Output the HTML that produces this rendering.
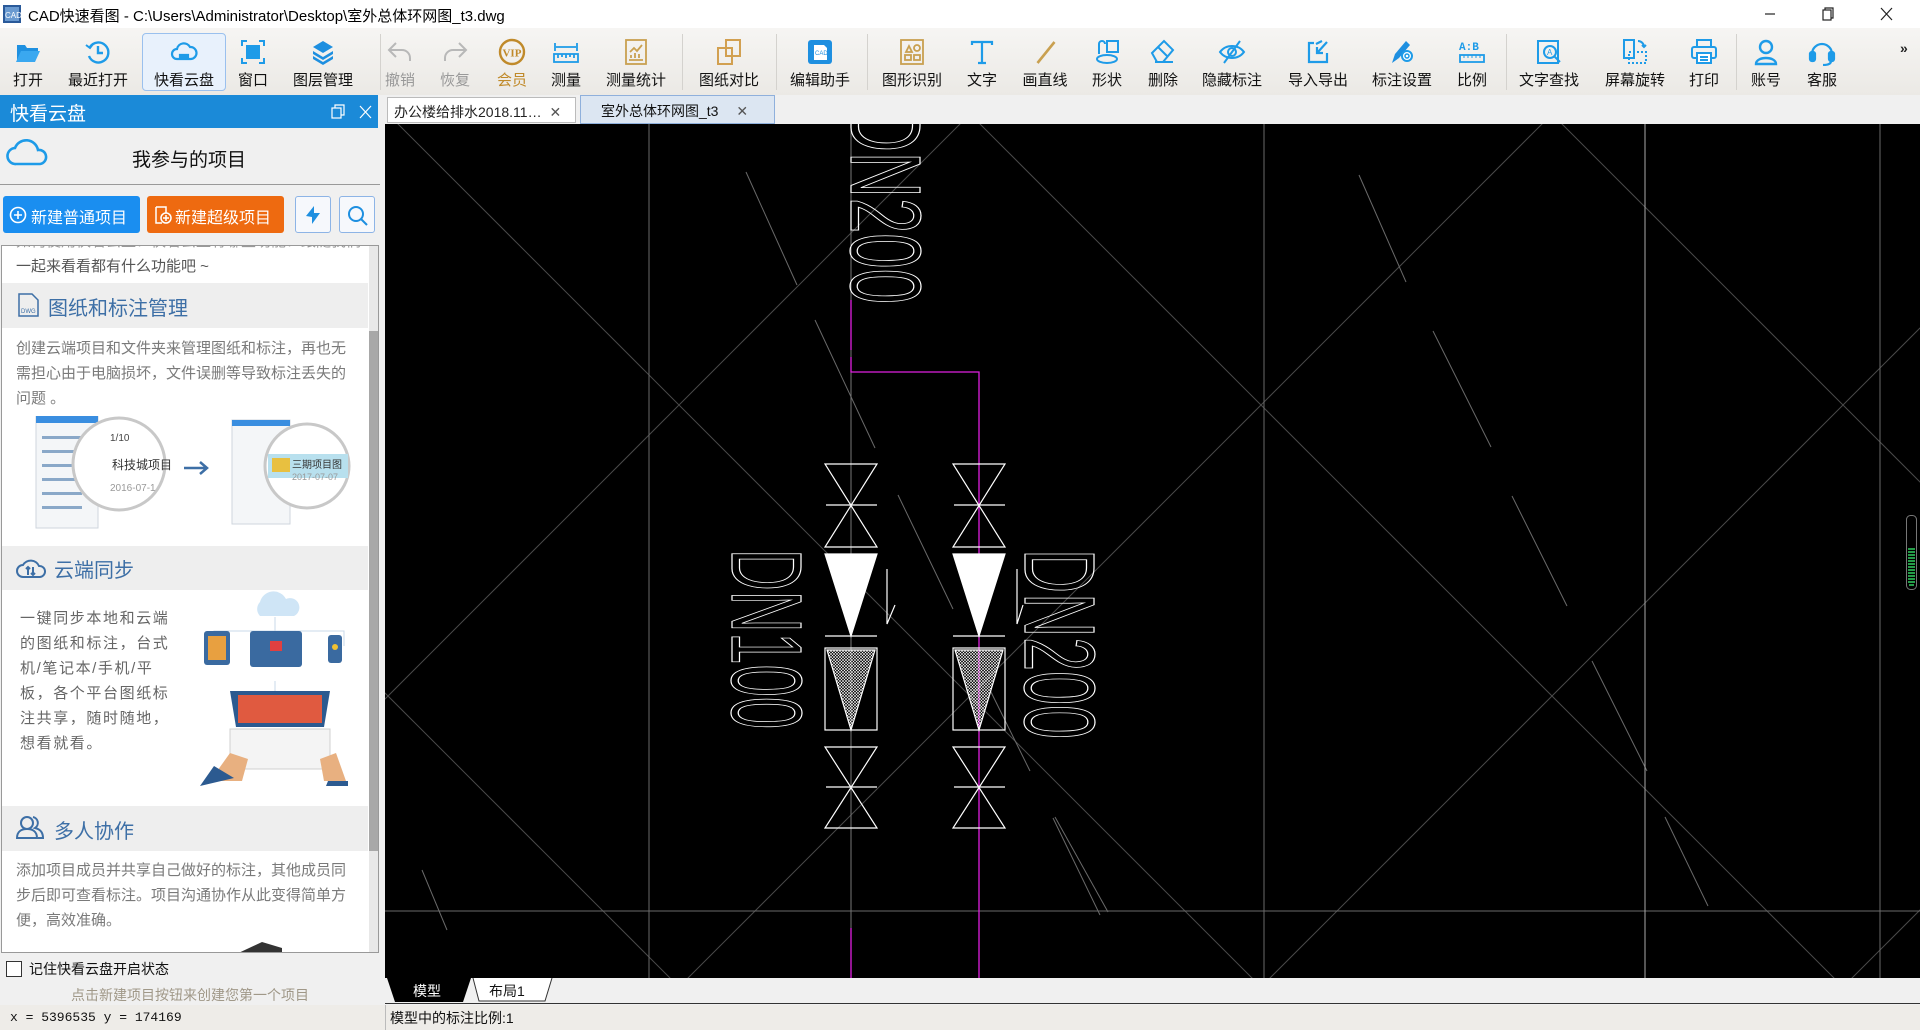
<!DOCTYPE html>
<html><head><meta charset="utf-8">
<style>
*{margin:0;padding:0;box-sizing:border-box}
body{width:1920px;height:1030px;overflow:hidden;position:relative;background:#f0f0f0;font-family:"Liberation Sans","Noto Sans CJK SC",sans-serif;}
.abs{position:absolute}
#title{left:0;top:0;width:1920px;height:28px;background:#fff}
#title .t{left:28px;top:5px;font-size:15px;color:#000;white-space:nowrap}
#tb{left:0;top:28px;width:1920px;height:67px;background:linear-gradient(#f6f5f3,#ebe9e5)}
.it{position:absolute;top:0;height:67px;transform:translateX(-50%);text-align:center;white-space:nowrap}
.it svg{position:absolute;left:50%;margin-left:-14px;top:10px;width:28px;height:28px}
.it span{display:block;margin-top:41px;font-size:15px;color:#111;padding:0 2px}
.it.dis span{color:#999}
.it.vip span{color:#c08a2a}
.sep{position:absolute;top:6px;width:1px;height:56px;background:#d4d2ce}
#panel{left:0;top:95px;width:380px;height:910px;background:#f0f0f0}
#ph{left:0;top:0;width:378px;height:33px;background:#1b8ad8;color:#fff;font-size:19px;padding:4px 10px}
.para{font-size:15px;color:#7a7a7a;line-height:25px}
.sh{position:absolute;left:0;width:366px;height:45px;background:#eeeeee;color:#3d6fa6;font-size:20px}
</style></head><body>

<div id="title" class="abs">
 <svg class="abs" style="left:3px;top:5px" width="18" height="18"><rect x="0" y="0" width="18" height="18" fill="#2a5a9a"/><rect x="2" y="2" width="14" height="14" fill="#6a9ad0"/><text x="2" y="13" font-size="8" fill="#fff" font-family="Liberation Sans">CAD</text></svg>
 <div class="abs t">CAD快速看图 - C:\Users\Administrator\Desktop\室外总体环网图_t3.dwg</div>
 <svg class="abs" style="left:1764px;top:6px" width="150" height="18" stroke="#222" fill="none" stroke-width="1.2">
  <line x1="1" y1="8" x2="11" y2="8"/>
  <rect x="59" y="4" width="8" height="10"/><path d="M61 4 V2 H69 V12 H67"/>
  <path d="M117 2 L128 14 M128 2 L117 14"/>
 </svg>
</div>

<div id="tb" class="abs">
 <div class="it" style="left:184px;top:5px;height:58px;width:84px;background:#e8f1fc;border:1px solid #9ac0ee;border-radius:4px"></div>
 <div class="it" style="left:28px"><svg viewBox="0 0 28 28"><path d="M3 7h8l2 3h11v3H8l-5 11z" fill="#1f90e0"/><path d="M7 13h19l-5 11H2z" fill="#3aa8f0"/></svg><span>打开</span></div>
 <div class="it" style="left:98px"><svg viewBox="0 0 28 28" fill="none" stroke="#1e9be8" stroke-width="2.4"><path d="M6 9a10 10 0 1 1-1 9"/><path d="M14 8v7h5"/><path d="M2 7l4 3 3-4" stroke-width="2"/></svg><span>最近打开</span></div>
 <div class="it" style="left:184px"><svg viewBox="0 0 28 28" fill="none" stroke="#1e9be8" stroke-width="2.2"><path d="M7 21a5 5 0 0 1 0-10 7 7 0 0 1 13-2 6 6 0 0 1 1 12z"/><path d="M10 22v-5h8v5M10 19h8"/></svg><span>快看云盘</span></div>
 <div class="it" style="left:253px"><svg viewBox="0 0 28 28"><rect x="7" y="7" width="14" height="14" fill="#1e9be8"/><path d="M3 8V3h5M20 3h5v5M25 20v5h-5M8 25H3v-5" stroke="#1e9be8" stroke-width="2" fill="none"/></svg><span>窗口</span></div>
 <div class="it" style="left:323px"><svg viewBox="0 0 28 28" fill="#1e8fe0"><path d="M14 3l10 6-10 6-10-6z"/><path d="M4 13l10 6 10-6v3l-10 6-10-6z"/><path d="M4 18l10 6 10-6v3l-10 6-10-6z"/></svg><span>图层管理</span></div>
 <div class="sep" style="left:380px"></div>
 <div class="it dis" style="left:400px"><svg viewBox="0 0 28 28" fill="none" stroke="#b8b8b8" stroke-width="2"><path d="M10 5L3 12l7 7M3 12h13a8 8 0 0 1 8 8v3"/></svg><span>撤销</span></div>
 <div class="it dis" style="left:455px"><svg viewBox="0 0 28 28" fill="none" stroke="#b8b8b8" stroke-width="2"><path d="M18 5l7 7-7 7M25 12H12a8 8 0 0 0-8 8v3"/></svg><span>恢复</span></div>
 <div class="it vip" style="left:512px"><svg viewBox="0 0 28 28"><circle cx="14" cy="14" r="12" fill="none" stroke="#c08a2a" stroke-width="2.4"/><text x="4.5" y="18.5" font-size="11" font-weight="bold" fill="#c08a2a" font-family="Liberation Serif">VIP</text></svg><span>会员</span></div>
 <div class="it" style="left:566px"><svg viewBox="0 0 28 28" fill="none" stroke="#1e9be8" stroke-width="1.8"><path d="M3 5v8M25 5v8M4 9h20"/><rect x="2" y="16" width="24" height="8"/><path d="M6 16v4M10 16v3M14 16v4M18 16v3M22 16v4"/></svg><span>测量</span></div>
 <div class="it" style="left:636px"><svg viewBox="0 0 28 28" fill="none" stroke="#c9a050" stroke-width="1.8"><rect x="4" y="2" width="20" height="24"/><path d="M8 14l4-4 3 3 5-6M9 20v-3M13 20v-5M17 20v-4M7 22h14"/></svg><span>测量统计</span></div>
 <div class="sep" style="left:682px"></div>
 <div class="it" style="left:729px"><svg viewBox="0 0 28 28" fill="none" stroke="#d2a050" stroke-width="2"><rect x="11" y="2" width="14" height="16"/><rect x="3" y="10" width="14" height="16"/></svg><span>图纸对比</span></div>
 <div class="sep" style="left:776px"></div>
 <div class="it" style="left:820px"><svg viewBox="0 0 28 28"><rect x="2" y="2" width="24" height="24" rx="3" fill="#1e8fe0"/><path d="M8 7h10l3 3v12H8z" fill="#fff"/><text x="9" y="17" font-size="6" fill="#1e8fe0" font-family="Liberation Sans">CAD</text></svg><span>编辑助手</span></div>
 <div class="sep" style="left:867px"></div>
 <div class="it" style="left:912px"><svg viewBox="0 0 28 28" fill="none" stroke="#c9a050" stroke-width="1.8"><rect x="3" y="2" width="22" height="24"/><path d="M8 14l3-6 3 6z"/><circle cx="19" cy="10" r="3"/><rect x="7" y="17" width="6" height="5"/><rect x="16" y="17" width="6" height="5"/></svg><span>图形识别</span></div>
 <div class="it" style="left:982px"><svg viewBox="0 0 28 28" fill="none" stroke="#1e9be8" stroke-width="2.2"><path d="M4 7V4h20v3M14 4v21M10 25h8"/></svg><span>文字</span></div>
 <div class="it" style="left:1045px"><svg viewBox="0 0 28 28"><path d="M6 25L23 4" stroke="#c9a050" stroke-width="2.6"/></svg><span>画直线</span></div>
 <div class="it" style="left:1107px"><svg viewBox="0 0 28 28" fill="none" stroke="#1e9be8" stroke-width="2"><rect x="14" y="3" width="11" height="11"/><ellipse cx="14" cy="21" rx="10" ry="4"/><path d="M6 16V6a3 3 0 0 1 6 0"/></svg><span>形状</span></div>
 <div class="it" style="left:1163px"><svg viewBox="0 0 28 28" fill="none" stroke="#1e9be8" stroke-width="2"><path d="M3 15L15 3l9 9-10 12H8z"/><path d="M9 9l9 9M6 24h18"/></svg><span>删除</span></div>
 <div class="it" style="left:1232px"><svg viewBox="0 0 28 28" fill="none" stroke="#1e9be8" stroke-width="2"><path d="M2 14c6-8 18-8 24 0-6 8-18 8-24 0z"/><circle cx="14" cy="14" r="4"/><path d="M22 3L6 25"/></svg><span>隐藏标注</span></div>
 <div class="it" style="left:1318px"><svg viewBox="0 0 28 28" fill="none" stroke="#1e9be8" stroke-width="2.2"><path d="M10 5H5v19h18v-9M12 6l6-3M23 4l-9 10M13 9v6h6"/></svg><span>导入导出</span></div>
 <div class="it" style="left:1402px"><svg viewBox="0 0 28 28"><path d="M4 25l3-9L18 3l4 4L11 20z" fill="#1e8fe0"/><circle cx="19" cy="18" r="5" fill="#fff" stroke="#1e9be8" stroke-width="2"/><circle cx="19" cy="18" r="2" fill="none" stroke="#1e9be8" stroke-width="1.5"/></svg><span>标注设置</span></div>
 <div class="it" style="left:1472px"><svg viewBox="0 0 28 28"><text x="1" y="12" font-size="11" font-weight="bold" fill="#1e9be8" font-family="Liberation Mono">A:B</text><rect x="2" y="17" width="24" height="7" fill="none" stroke="#1e9be8" stroke-width="1.8"/><path d="M6 17v3M10 17v3M14 17v3M18 17v3M22 17v3" stroke="#1e9be8"/></svg><span>比例</span></div>
 <div class="sep" style="left:1506px"></div>
 <div class="it" style="left:1549px"><svg viewBox="0 0 28 28" fill="none" stroke="#1e9be8" stroke-width="2"><rect x="3" y="3" width="20" height="22"/><circle cx="15" cy="14" r="6"/><path d="M19 18l6 6"/><text x="12" y="17" font-size="8" fill="#1e9be8" stroke="none" font-family="Liberation Sans">A</text></svg><span>文字查找</span></div>
 <div class="it" style="left:1635px"><svg viewBox="0 0 28 28" fill="none" stroke="#1e9be8" stroke-width="2"><rect x="3" y="2" width="10" height="18"/><rect x="8" y="14" width="17" height="11" stroke-dasharray="2 2"/><path d="M17 3a6 6 0 0 1 6 6M21 7l2 2 2-2"/></svg><span>屏幕旋转</span></div>
 <div class="it" style="left:1704px"><svg viewBox="0 0 28 28" fill="none" stroke="#1e9be8" stroke-width="2"><rect x="7" y="2" width="14" height="7"/><rect x="2" y="9" width="24" height="11" rx="2"/><rect x="7" y="15" width="14" height="10" fill="#fff"/><path d="M10 19h8M10 22h8"/></svg><span>打印</span></div>
 <div class="sep" style="left:1736px"></div>
 <div class="it" style="left:1766px"><svg viewBox="0 0 28 28" fill="none" stroke="#1e9be8" stroke-width="2.4"><circle cx="14" cy="9" r="6"/><path d="M4 26c0-8 20-8 20 0z"/></svg><span>账号</span></div>
 <div class="it" style="left:1822px"><svg viewBox="0 0 28 28" fill="none" stroke="#1e9be8" stroke-width="2.2"><path d="M4 16a10 10 0 0 1 20 0"/><rect x="2" y="14" width="5" height="9" rx="2" fill="#1e9be8"/><rect x="21" y="14" width="5" height="9" rx="2" fill="#1e9be8"/><path d="M23 23c0 3-4 4-8 4"/></svg><span>客服</span></div>
 <div class="abs" style="left:1900px;top:12px;font-size:14px;font-weight:bold;color:#222">»</div>
</div>

<!-- document tabs -->
<div class="abs" style="left:380px;top:95px;width:1540px;height:29px;background:#f0f0f0"></div>
<div class="abs" style="left:387px;top:97px;width:189px;height:26px;background:#fff;border:1px solid #bbb;font-size:14px;padding:4px 6px;white-space:nowrap;color:#222">办公楼给排水2018.11… <span style="color:#555;margin-left:4px">✕</span></div>
<div class="abs" style="left:580px;top:95px;width:195px;height:29px;background:#dce6f2;border:1px solid #8fb0dc;font-size:14px;padding:5px 10px 0 20px;white-space:nowrap;color:#111">室外总体环网图_t3 <span style="color:#555;margin-left:14px">✕</span></div>

<!-- canvas -->
<svg class="abs" style="left:385px;top:124px" width="1535" height="854" viewBox="385 124 1535 854">
 <defs>
  <pattern id="h" width="3" height="3" patternUnits="userSpaceOnUse"><path d="M0 3L3 0M0 0L3 3" stroke="#fff" stroke-width="0.6"/></pattern>
  <clipPath id="c"><rect x="385" y="124" width="1535" height="854"/></clipPath>
 </defs>
 <rect x="385" y="124" width="1535" height="854" fill="#000"/>
 <g clip-path="url(#c)" stroke="#4a4a4a" stroke-width="1">
  <line x1="-1472" y1="0" x2="-442" y2="1030"/><line x1="-890" y1="0" x2="140" y2="1030"/><line x1="-308" y1="0" x2="722" y2="1030"/><line x1="274" y1="0" x2="1304" y2="1030"/><line x1="856" y1="0" x2="1886" y2="1030"/><line x1="1438" y1="0" x2="2468" y2="1030"/><line x1="2020" y1="0" x2="3050" y2="1030"/>
  <line x1="-80" y1="0" x2="-1110" y2="1030"/><line x1="502" y1="0" x2="-528" y2="1030"/><line x1="1084" y1="0" x2="54" y2="1030"/><line x1="1666" y1="0" x2="636" y2="1030"/><line x1="2248" y1="0" x2="1218" y2="1030"/><line x1="2830" y1="0" x2="1800" y2="1030"/><line x1="3412" y1="0" x2="2382" y2="1030"/>
 </g>
 <g stroke="#6a6a6a" stroke-width="1">
  <line x1="649" y1="124" x2="649" y2="978"/><line x1="1264" y1="124" x2="1264" y2="978"/><line x1="1880" y1="124" x2="1880" y2="978"/>
  <line x1="385" y1="911" x2="1920" y2="911"/>
  <line x1="746" y1="172" x2="797" y2="285"/><line x1="815" y1="320" x2="875" y2="448"/><line x1="898" y1="495" x2="953" y2="609"/><line x1="990" y1="690" x2="1030" y2="771"/><line x1="1053" y1="818" x2="1100" y2="915"/>
  <line x1="1359" y1="175" x2="1406" y2="282"/><line x1="1433" y1="331" x2="1491" y2="447"/><line x1="1512" y1="496" x2="1567" y2="606"/><line x1="1592" y1="661" x2="1647" y2="771"/><line x1="1665" y1="817" x2="1708" y2="906"/><line x1="422" y1="870" x2="447" y2="930"/><line x1="1055" y1="817" x2="1108" y2="912"/>
 </g>
 <line x1="1645" y1="124" x2="1645" y2="978" stroke="#aaa"/>
 <line x1="851" y1="124" x2="851" y2="978" stroke="#777"/>
 <g stroke="#e020e0" stroke-width="1.3" fill="none">
  <path d="M851 300V350M851 357V372H979V978"/><path d="M851 928V978"/>
 </g>
 <g stroke="#fff" stroke-width="1.2" fill="none">
  <g id="v1">
   <path d="M825 464H877L825 547H877Z"/><path d="M826 505H877"/>
   <path d="M825 554H877L851 636Z" fill="#fff"/><path d="M825 636H877"/>
   <rect x="825" y="648" width="52" height="82"/><path d="M827 650H875L851 730Z" fill="url(#h)"/>
   <path d="M825 747H877L825 828H877Z"/><path d="M826 787H877"/>
  </g>
  <use href="#v1" x="128"/>
  <path d="M887 569V624L895 605"/><path d="M1017 569V624L1023 605"/>
 </g>
 <g fill="none" stroke="#fff" stroke-width="1.2" font-family="Liberation Sans" font-size="100">
  <text transform="translate(732,549) rotate(90)" textLength="180" lengthAdjust="spacingAndGlyphs">DN100</text>
  <text transform="translate(1025,549) rotate(90)" textLength="190" lengthAdjust="spacingAndGlyphs">DN200</text>
  <text transform="translate(851,106) rotate(90)" textLength="198" lengthAdjust="spacingAndGlyphs">DN200</text>
 </g>
 <rect x="1906.5" y="515.5" width="10" height="74" rx="4" fill="none" stroke="#777"/>
 <g stroke="#30d060" stroke-width="1.6"><path d="M1908 549h7M1908 552h7M1908 555h7M1908 558h7M1908 561h7M1908 564h7M1908 567h7M1908 570h7M1908 573h7M1908 576h7M1908 579h7M1908 582h7M1909 585h5"/></g>
</svg>

<!-- bottom tabs & status -->
<div class="abs" style="left:385px;top:978px;width:1535px;height:26px;background:#f0f0f0;border-bottom:1px solid #333"></div>
<svg class="abs" style="left:385px;top:978px" width="170" height="26">
 <path d="M2 0L10 24H78L86 0Z" fill="#000"/>
 <path d="M88 0L94 23H160L167 0" fill="#fff" stroke="#333"/>
 <text x="28" y="18" font-size="14" fill="#fff" font-family="Liberation Sans,Noto Sans CJK SC,sans-serif">模型</text>
 <text x="104" y="18" font-size="14" fill="#111" font-family="Liberation Sans,Noto Sans CJK SC,sans-serif">布局1</text>
</svg>
<div class="abs" style="left:385px;top:1005px;width:1535px;height:25px;background:#eeece8;border-left:1px solid #bbb;font-size:14px;padding:3px 4px;color:#111">模型中的标注比例:1</div>
<div class="abs" style="left:0;top:1005px;width:385px;height:25px;background:#eeece8;font-family:'Liberation Mono',monospace;font-size:13px;padding:5px 10px;color:#111">x = 5396535 y = 174169</div>

<!-- left panel -->
<div id="panel" class="abs">
 <div id="ph" class="abs">快看云盘
  <svg class="abs" style="left:330px;top:9px" width="44" height="16" fill="none" stroke="#fff" stroke-width="1.2"><rect x="2" y="4" width="9" height="10"/><path d="M5 4V1h9v10h-3"/><path d="M30 2l11 12M41 2L30 14"/></svg>
 </div>
 <svg class="abs" style="left:6px;top:42px" width="42" height="30" fill="none" stroke="#1e9be8" stroke-width="2.6"><path d="M10 27a8 8 0 0 1-1-16 12 12 0 0 1 23 2 7 7 0 0 1 2 14z"/></svg>
 <div class="abs" style="left:132px;top:50px;font-size:19px;color:#111">我参与的项目</div>
 <div class="abs" style="left:0;top:89px;width:380px;height:1px;background:#999"></div>
 <div class="abs" style="left:3px;top:101px;width:137px;height:37px;background:#1a8ef0;border-radius:3px;color:#fff;font-size:16px;padding:8px 0 0 28px">新建普通项目</div>
 <svg class="abs" style="left:9px;top:111px" width="18" height="18" fill="none" stroke="#fff" stroke-width="1.6"><circle cx="9" cy="9" r="7.5"/><path d="M9 5v8M5 9h8"/></svg>
 <div class="abs" style="left:147px;top:101px;width:137px;height:37px;background:#ee6a10;border-radius:3px;color:#fff;font-size:16px;padding:8px 0 0 28px">新建超级项目</div>
 <svg class="abs" style="left:154px;top:110px" width="18" height="20" fill="none" stroke="#fff" stroke-width="1.5"><path d="M2 2h10v6M2 2v16h6"/><circle cx="12" cy="13" r="5"/><path d="M12 10v6M9 13h6"/></svg>
 <div class="abs" style="left:295px;top:101px;width:36px;height:37px;border:1px solid #8db4e6;border-radius:3px;background:#f6f8fc"></div>
 <svg class="abs" style="left:302px;top:109px" width="22" height="22" fill="#1e8fe0"><path d="M4 12L12 2v7h6L10 20v-7z"/></svg>
 <div class="abs" style="left:339px;top:101px;width:36px;height:37px;border:1px solid #8db4e6;border-radius:3px;background:#f6f8fc"></div>
 <svg class="abs" style="left:347px;top:110px" width="22" height="22" fill="none" stroke="#1e8fe0" stroke-width="2"><circle cx="9" cy="9" r="7"/><path d="M14 14l6 6"/></svg>

 <div class="abs" style="left:1px;top:150px;width:378px;height:708px;background:#fff;border:1px solid #999;overflow:hidden">
  <div class="abs" style="left:367px;top:0;width:10px;height:708px;background:#e8e8e8"></div>
  <div class="abs" style="left:367px;top:85px;width:10px;height:520px;background:#a8a8a8"></div>
  <div class="abs para" style="left:14px;top:-17px;color:#999;font-size:15px;white-space:nowrap">如何使用快看云盘？快看云盘有哪些功能？跟随我们</div>
  <div class="abs para" style="left:14px;top:8px;color:#555;font-size:15px">一起来看看都有什么功能吧 ~</div>
  <div class="sh" style="top:37px"><svg class="abs" style="left:16px;top:10px" width="22" height="24" fill="none" stroke="#3d6fa6" stroke-width="1.5"><path d="M1 1h13l6 6v16H1z"/><text x="3" y="20" font-size="6" fill="#3d6fa6" stroke="none" font-family="Liberation Sans">DWG</text></svg><span class="abs" style="left:46px;top:9px">图纸和标注管理</span></div>
  <div class="abs para" style="left:14px;top:90px;width:340px">创建云端项目和文件夹来管理图纸和标注，再也无需担心由于电脑损坏，文件误删等导致标注丢失的问题 。</div>
  <svg class="abs" style="left:30px;top:170px" width="330" height="120">
   <rect x="4" y="0" width="62" height="112" fill="#f4f6f8" stroke="#cfd6de"/><rect x="4" y="0" width="62" height="7" fill="#3a8ee0"/>
   <g fill="#8aa8c8"><rect x="10" y="20" width="40" height="3"/><rect x="10" y="34" width="40" height="3"/><rect x="10" y="48" width="40" height="3"/><rect x="10" y="62" width="40" height="3"/><rect x="10" y="76" width="40" height="3"/><rect x="10" y="90" width="40" height="3"/></g>
   <circle cx="87" cy="48" r="46" fill="#fff" stroke="#c8c8c8" stroke-width="3"/>
   <text x="78" y="25" font-size="10" fill="#444">1/10</text><text x="80" y="53" font-size="12" fill="#333" font-family="Noto Sans CJK SC">科技城项目</text><text x="78" y="75" font-size="10" fill="#999">2016-07-1</text>
   <path d="M152 52h22M168 46l7 6-7 6" stroke="#3d6fa6" stroke-width="2.5" fill="none"/>
   <rect x="200" y="4" width="58" height="104" fill="#f4f6f8" stroke="#cfd6de"/><rect x="200" y="4" width="58" height="6" fill="#3a8ee0"/>
   <circle cx="275" cy="50" r="42" fill="#fff" stroke="#c8c8c8" stroke-width="3"/>
   <rect x="236" y="38" width="80" height="24" fill="#b8e0ee"/><rect x="240" y="42" width="18" height="14" fill="#e8c040"/>
   <text x="260" y="52" font-size="10" fill="#333" font-family="Noto Sans CJK SC">三期项目图</text><text x="260" y="64" font-size="9" fill="#999">2017-07-07</text>
  </svg>
  <div class="sh" style="top:300px;height:44px"><svg class="abs" style="left:14px;top:10px" width="30" height="24" fill="none" stroke="#3d6fa6" stroke-width="2"><path d="M7 21a6 6 0 0 1 0-12 9 9 0 0 1 16 1 5 5 0 0 1 1 11z"/><path d="M12 19v-8M10 13l2-2 2 2M17 11v8M15 17l2 2 2-2"/></svg><span class="abs" style="left:52px;top:8px">云端同步</span></div>
  <div class="abs para" style="left:18px;top:360px;width:160px;letter-spacing:1.6px;color:#666">一键同步本地和云端的图纸和标注，台式机/笔记本/手机/平板，各个平台图纸标注共享，随时随地，想看就看。</div>
  <svg class="abs" style="left:198px;top:345px" width="150" height="195">
   <path d="M60 25a10 10 0 0 1 0-14 14 14 0 0 1 26-3 8 8 0 0 1 8 17z" fill="#cfe5f6"/>
   <path d="M14 55V40h130v15M75 26v14M75 110v-20" stroke="#c8d8e8" fill="none"/>
   <rect x="4" y="40" width="26" height="34" rx="3" fill="#3a6aa0"/><rect x="8" y="45" width="18" height="24" fill="#e8a040"/>
   <rect x="50" y="40" width="52" height="36" rx="3" fill="#3a6aa0"/><rect x="70" y="50" width="12" height="10" fill="#e04040"/>
   <rect x="128" y="44" width="14" height="28" rx="3" fill="#3a6aa0"/><circle cx="135" cy="56" r="3" fill="#f0c030"/>
   <path d="M30 100h100l-6 36H36z" fill="#2c5a90"/><rect x="38" y="104" width="84" height="28" fill="#e05a40"/>
   <rect x="30" y="138" width="100" height="40" fill="#f4f4f4" stroke="#d0d0d0"/>
   <path d="M10 190l20-28 18 6-6 22z" fill="#e8b080"/><path d="M0 195l14-20 20 12z" fill="#2c5a90"/>
   <path d="M120 168l16-6 10 28h-22z" fill="#e8b080"/><path d="M128 190h20v5h-22z" fill="#2c5a90"/>
  </svg>
  <div class="sh" style="top:560px"><svg class="abs" style="left:14px;top:8px" width="30" height="26" fill="none" stroke="#3d6fa6" stroke-width="2"><circle cx="11" cy="9" r="6"/><path d="M1 24c0-7 5-9 10-9s10 2 10 9z"/><path d="M17 3a6 6 0 0 1 2 11c4 1 8 3 8 10h-5"/></svg><span class="abs" style="left:52px;top:9px">多人协作</span></div>
  <div class="abs para" style="left:14px;top:612px;width:340px">添加项目成员并共享自己做好的标注，其他成员同步后即可查看标注。项目沟通协作从此变得简单方便，高效准确。</div>
  <svg class="abs" style="left:220px;top:690px" width="70" height="20"><path d="M10 20l30-14 20 6v8z" fill="#333"/></svg>
 </div>
 <div class="abs" style="left:6px;top:866px;width:16px;height:16px;border:1px solid #333;background:#fff"></div>
 <div class="abs" style="left:29px;top:864px;font-size:14px;color:#111">记住快看云盘开启状态</div>
 <div class="abs" style="left:0;top:890px;width:380px;text-align:center;font-size:14px;color:#a09888">点击新建项目按钮来创建您第一个项目</div>
</div>
<div class="abs" style="left:380px;top:95px;width:5px;height:910px;background:#f0f0f0"></div>
</body></html>
